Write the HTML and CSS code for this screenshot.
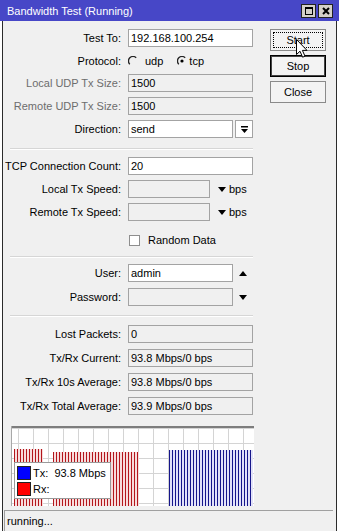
FILE: index.html
```html
<!DOCTYPE html>
<html lang="en">
<head>
    <meta charset="UTF-8">
    <title>Bandwidth Test (Running)</title>
    <link rel="stylesheet" href="styles.css">
</head>
<body>

<div class="titlebar">
    <span class="title">Bandwidth Test (Running)</span>
    <div class="title-buttons">
        <span class="tbtn">
            <svg width="10" height="10" viewBox="0 0 10 10"><rect x="1.5" y="1.5" width="7" height="7" fill="none" stroke="#000"/><rect x="1" y="1" width="8" height="2" fill="#000"/></svg>
        </span>
        <span class="tbtn">
            <svg width="10" height="10" viewBox="0 0 10 10"><path d="M2 2 L8 8 M8 2 L2 8" stroke="#000" stroke-width="2"/></svg>
        </span>
    </div>
</div>

<div class="window">
    <div class="main">
        <div class="form">
            <div class="row">
                <span class="lbl">Test To:</span>
                <div class="field">192.168.100.254</div>
            </div>
            <div class="row proto">
                <span class="lbl">Protocol:</span>
                <svg class="radio" width="10" height="10" viewBox="0 0 10 10"><path d="M8.2 1.8 A4.5 4.5 0 0 0 1.8 8.2" fill="none" stroke="#222" stroke-width="1.3"/></svg>
                <span class="opt">udp</span>
                <svg class="radio second" width="10" height="10" viewBox="0 0 10 10"><path d="M8.2 1.8 A4.5 4.5 0 0 0 1.8 8.2" fill="none" stroke="#222" stroke-width="1.3"/><circle cx="5" cy="5" r="1.6" fill="#000"/></svg>
                <span class="opt tight">tcp</span>
            </div>
            <div class="row">
                <span class="lbl off">Local UDP Tx Size:</span>
                <div class="field ro">1500</div>
            </div>
            <div class="row">
                <span class="lbl off">Remote UDP Tx Size:</span>
                <div class="field ro">1500</div>
            </div>
            <div class="row">
                <span class="lbl">Direction:</span>
                <div class="field short">send</div>
                <span class="dropbtn">
                    <svg width="9" height="9" viewBox="0 0 9 9"><rect x="1" y="1" width="7" height="1.5" fill="#000"/><path d="M1 4 H8 L4.5 8 Z" fill="#000"/></svg>
                </span>
            </div>

            <div class="sep a"></div>

            <div class="row">
                <span class="lbl">TCP Connection Count:</span>
                <div class="field">20</div>
            </div>
            <div class="row">
                <span class="lbl">Local Tx Speed:</span>
                <div class="field ro speed"></div>
                <svg class="arrow" width="8" height="5" viewBox="0 0 8 5"><path d="M0 0 H8 L4 5 Z" fill="#000"/></svg>
                <span class="unit">bps</span>
            </div>
            <div class="row m10">
                <span class="lbl">Remote Tx Speed:</span>
                <div class="field ro speed"></div>
                <svg class="arrow" width="8" height="5" viewBox="0 0 8 5"><path d="M0 0 H8 L4 5 Z" fill="#000"/></svg>
                <span class="unit">bps</span>
            </div>
            <div class="row m0">
                <span class="check"></span>
                <span class="check-label">Random Data</span>
            </div>

            <div class="sep b"></div>

            <div class="row m6">
                <span class="lbl">User:</span>
                <div class="field short">admin</div>
                <svg class="arrow wide" width="8" height="5" viewBox="0 0 8 5"><path d="M0 5 H8 L4 0 Z" fill="#000"/></svg>
            </div>
            <div class="row m0">
                <span class="lbl">Password:</span>
                <div class="field ro short"></div>
                <svg class="arrow wide" width="8" height="5" viewBox="0 0 8 5"><path d="M0 0 H8 L4 5 Z" fill="#000"/></svg>
            </div>

            <div class="sep c"></div>

            <div class="row m6">
                <span class="lbl">Lost Packets:</span>
                <div class="field ro">0</div>
            </div>
            <div class="row m6">
                <span class="lbl">Tx/Rx Current:</span>
                <div class="field ro">93.8 Mbps/0 bps</div>
            </div>
            <div class="row m6">
                <span class="lbl">Tx/Rx 10s Average:</span>
                <div class="field ro">93.8 Mbps/0 bps</div>
            </div>
            <div class="row m0">
                <span class="lbl">Tx/Rx Total Average:</span>
                <div class="field ro">93.9 Mbps/0 bps</div>
            </div>
        </div>

        <div class="buttons">
            <div class="btn focused">Start
                <svg class="cursor" width="13" height="20" viewBox="0 0 13 20"><path d="M0.5 0.5 V15.5 L4 12.2 L6.6 18.2 L9 17.2 L6.4 11.4 H11 Z" fill="#fff" stroke="#000" stroke-width="1"/></svg>
            </div>
            <div class="btn default">Stop</div>
            <div class="btn">Close</div>
        </div>
    </div>

    <div class="graph">
        <svg width="243" height="80" viewBox="0 0 243 80">
            <defs>
                <pattern id="grid" x="7" y="2" width="15" height="15" patternUnits="userSpaceOnUse">
                    <path d="M0.5 0 V15 M0 0.5 H15" stroke="#d4d4d4" stroke-width="1"/>
                </pattern>
                <pattern id="red" x="3" y="0" width="3" height="80" patternUnits="userSpaceOnUse">
                    <rect x="0" y="0" width="3" height="80" fill="#f7dcdc"/>
                    <rect x="0" y="0" width="1" height="80" fill="#b3161c"/>
                </pattern>
                <pattern id="blue" x="158" y="0" width="3" height="80" patternUnits="userSpaceOnUse">
                    <rect x="0" y="0" width="3" height="80" fill="#e2e2f8"/>
                    <rect x="0" y="0" width="1" height="80" fill="#16168a"/>
                </pattern>
            </defs>
            <rect width="243" height="80" fill="#fff"/>
            <rect width="243" height="80" fill="url(#grid)"/>
            <rect x="3" y="23" width="29" height="57" fill="url(#red)"/>
            <rect x="42" y="26" width="86" height="54" fill="url(#red)"/>
            <rect x="158" y="24" width="84" height="56" fill="url(#blue)"/>
            <rect x="0" y="0" width="243" height="2" fill="#7d7d7d"/>
            <rect x="0" y="0" width="1" height="80" fill="#a8a8a8"/>
        </svg>
        <div class="legend">
            <div class="legend-item"><span class="swatch tx"></span>Tx:&nbsp; 93.8 Mbps</div>
            <div class="legend-item"><span class="swatch rx"></span>Rx:</div>
        </div>
    </div>

    <div class="status">running...</div>
</div>

</body>
</html>
```

FILE: styles.css
```css
body {
    margin: 0;
    width: 339px;
    height: 531px;
    overflow: hidden;
    background: #fff;
    font-family: "Liberation Sans", Arial, sans-serif;
    font-size: 11px;
    color: #000;
}

.titlebar {
    height: 21px;
    background: #4747c7;
    color: #fff;
    display: flex;
    align-items: center;
    justify-content: space-between;
    padding: 0 6px 0 7px;
}

.title-buttons {
    display: flex;
    gap: 2px;
}

.tbtn {
    box-sizing: border-box;
    width: 15px;
    height: 14px;
    background: #d4d0c8;
    border: 1px solid #222;
    display: flex;
    align-items: center;
    justify-content: center;
}

.window {
    position: relative;
    margin-left: 2px;
    width: 333px;
    height: 510px;
    border-left: 1px solid #2b2b2b;
    border-right: 1px solid #2b2b2b;
    background: #f0f0f0;
}

.main {
    display: flex;
}

.form {
    display: flex;
    flex-direction: column;
    width: 267px;
    padding-top: 8px;
}

.row {
    display: flex;
    align-items: center;
    flex: none;
    height: 18px;
    margin-bottom: 5px;
}

.row.proto { height: 17px; }
.row.m0 { margin-bottom: 0; }
.row.m6 { margin-bottom: 6px; }
.row.m10 { margin-bottom: 10px; }

.lbl {
    width: 118px;
    margin-right: 7px;
    text-align: right;
    white-space: nowrap;
}

.lbl.off {
    color: #6d6d6d;
}

.field {
    box-sizing: border-box;
    width: 125px;
    height: 18px;
    line-height: 16px;
    padding-left: 2px;
    border: 1px solid #a3a3a3;
    background: #fff;
    white-space: nowrap;
}

.field.ro { background: #f0f0f0; }
.field.short { width: 105px; }
.field.speed { width: 82px; }

.dropbtn {
    box-sizing: border-box;
    width: 18px;
    height: 18px;
    margin-left: 2px;
    border: 1px solid #a3a3a3;
    background: #fff;
    display: flex;
    align-items: center;
    justify-content: center;
}

.radio { flex: none; }
.radio.second { margin-left: 14px; }

.opt { margin-left: 7px; }
.opt.tight { margin-left: 2px; }

.arrow { margin-left: 8px; }
.arrow.wide { margin-left: 6px; }

.unit { margin-left: 3px; }

.check {
    box-sizing: border-box;
    width: 11px;
    height: 11px;
    margin-left: 126px;
    border: 1px solid #8e8e8e;
    background: #fff;
}

.check-label {
    margin-left: 8px;
}

.sep {
    flex: none;
    width: 243px;
    height: 0;
    border-top: 1px solid #d6d6d6;
    border-bottom: 1px solid #fff;
}

.sep.a { margin: 5px 0 7px 7px; }
.sep.b { margin: 7px 0 6px 7px; }
.sep.c { margin: 9px 0 8px 7px; }

.buttons {
    display: flex;
    flex-direction: column;
    gap: 4px;
    padding-top: 8px;
}

.btn {
    position: relative;
    box-sizing: border-box;
    width: 56px;
    height: 22px;
    border: 1px solid #8a8a8a;
    background: #f3f3f3;
    display: flex;
    align-items: center;
    justify-content: center;
}

.btn.focused::after {
    content: "";
    position: absolute;
    inset: 2px;
    border: 1px dotted #000;
}

.btn.default {
    border: 1px solid #000;
    box-shadow: inset 0 0 0 1px #444;
}

.cursor {
    position: absolute;
    left: 25px;
    top: 9px;
    z-index: 2;
}

.graph {
    position: relative;
    width: 243px;
    height: 80px;
    margin: 11px 0 0 8px;
}

.graph svg {
    display: block;
}

.legend {
    position: absolute;
    left: 3px;
    top: 36px;
    box-sizing: border-box;
    width: 97px;
    height: 37px;
    background: #fff;
    border: 1px solid #9a9a9a;
    padding: 2px 0 0 2px;
}

.legend-item {
    display: flex;
    align-items: center;
    height: 16px;
    font-size: 11px;
}

.swatch {
    box-sizing: border-box;
    width: 14px;
    height: 14px;
    margin-right: 2px;
    border: 1px solid #222;
}

.swatch.tx { background: #0000ff; }
.swatch.rx { background: #ff0000; }

.status {
    margin: 4px 3px 0 1px;
    height: 21px;
    line-height: 20px;
    padding-left: 2px;
    border-top: 1px solid #a0a0a0;
    border-left: 1px solid #a0a0a0;
}
```
